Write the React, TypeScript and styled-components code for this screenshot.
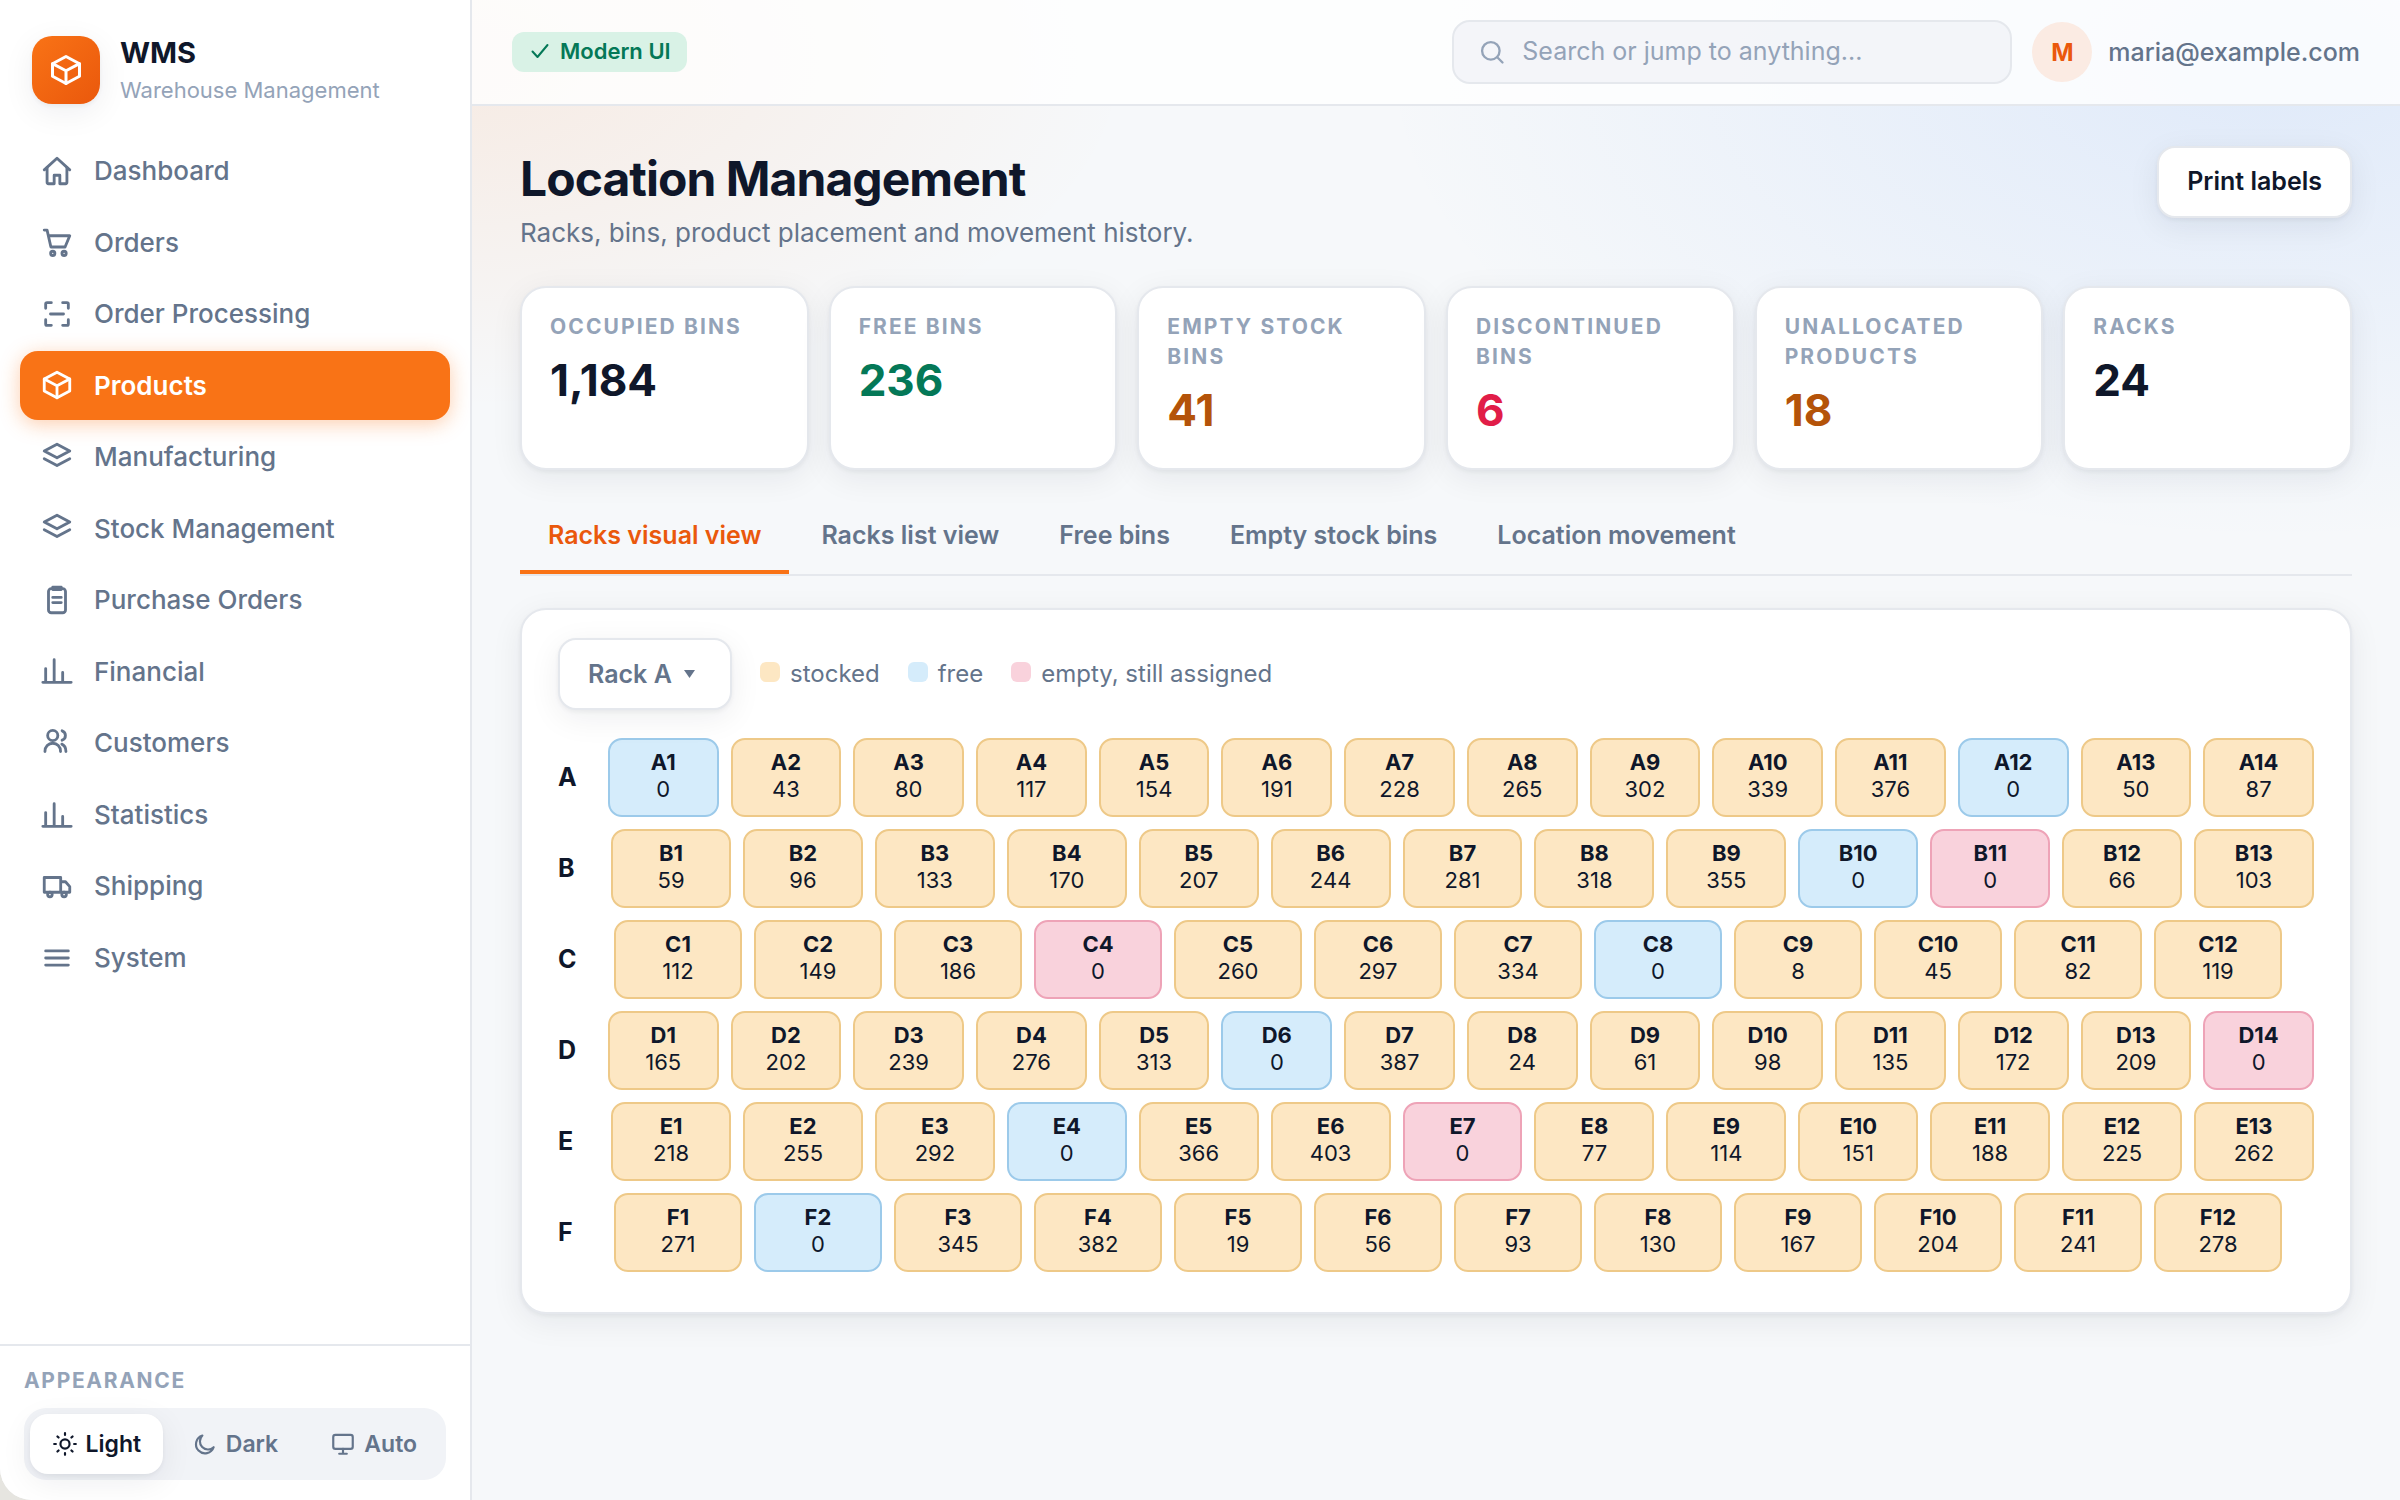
import React from "react";
import styled, { createGlobalStyle } from "styled-components";

const color = {
  ink: "#0f172a",
  muted: "#64748b",
  faint: "#94a3b8",
  line: "#e5e8ed",
  brand: "#f97316",
  brandDeep: "#ea580c",
  green: "#047857",
  amber: "#b45309",
  rose: "#e11d48",
};

const cardShadow = "0 2px 4px rgba(15, 23, 42, 0.05), 0 8px 32px rgba(15, 23, 42, 0.07)";

const GlobalStyle = createGlobalStyle`
  *, *::before, *::after { box-sizing: border-box; }
  body {
    margin: 0;
    background: #e6e5e0;
    color: ${color.ink};
    font-family: Inter, "Liberation Sans", sans-serif;
    font-size: 26px;
  }
  button, input, select { font: inherit; color: inherit; }
  h1, p, dl, dd, ul { margin: 0; padding: 0; }
`;

const Shell = styled.div`
  display: flex;
  min-height: 100vh;
  overflow: hidden;
  border-bottom-left-radius: 32px;
  background:
    radial-gradient(1000px 500px at 18% 4%, rgba(249, 115, 22, 0.1), transparent 70%),
    radial-gradient(1200px 640px at 95% 4%, rgba(59, 130, 246, 0.12), transparent 75%),
    #f6f8fa;
`;

const Sidebar = styled.aside`
  display: flex;
  flex-direction: column;
  flex: 0 0 472px;
  background: #fff;
  border-right: 2px solid ${color.line};
`;

const Brand = styled.div`
  display: flex;
  align-items: center;
  gap: 20px;
  padding: 33px 32px 29px;
`;

const BrandMark = styled.div`
  display: grid;
  place-items: center;
  width: 68px;
  height: 68px;
  border-radius: 20px;
  color: #fff;
  background: linear-gradient(135deg, ${color.brand}, ${color.brandDeep});
  box-shadow: ${cardShadow};
`;

const BrandName = styled.p`
  font-size: 29px;
  line-height: 40px;
  font-weight: 700;
`;

const BrandNote = styled.p`
  font-size: 22px;
  line-height: 34px;
  color: ${color.faint};
`;

const Nav = styled.nav`
  display: flex;
  flex-direction: column;
  gap: 2px;
  padding: 0 20px;
`;

const NavLink = styled.a<{ $active?: boolean }>`
  display: flex;
  align-items: center;
  gap: 20px;
  padding: 18px 20px;
  border-radius: 18px;
  font-size: 26px;
  line-height: 1.29;
  font-weight: ${(p) => (p.$active ? 600 : 500)};
  text-decoration: none;
  color: ${(p) => (p.$active ? "#fff" : color.muted)};
  background: ${(p) => (p.$active ? color.brand : "transparent")};
  box-shadow: ${(p) => (p.$active ? "0 4px 20px rgba(249, 115, 22, 0.35)" : "none")};
`;

const Icon = styled.svg<{ $size: number }>`
  flex: none;
  width: ${(p) => p.$size}px;
  height: ${(p) => p.$size}px;
  margin: -2px 0;
  fill: none;
  stroke: currentColor;
  stroke-width: 2;
  stroke-linecap: round;
  stroke-linejoin: round;
`;

const Appearance = styled.div`
  margin-top: auto;
  padding: 20px 24px;
  border-top: 2px solid ${color.line};
`;

const AppearanceTitle = styled.p`
  margin-bottom: 12px;
  font-size: 21px;
  line-height: 30px;
  font-weight: 700;
  letter-spacing: 0.08em;
  text-transform: uppercase;
  color: ${color.faint};
`;

const Segments = styled.div`
  display: flex;
  gap: 6px;
  padding: 6px;
  border-radius: 22px;
  background: #f1f3f7;
`;

const Segment = styled.button<{ $active?: boolean }>`
  display: flex;
  flex: 1 1 0;
  align-items: center;
  justify-content: center;
  gap: 8px;
  height: 60px;
  padding: 0;
  border: 0;
  border-radius: 18px;
  font-size: 23px;
  font-weight: 600;
  color: ${(p) => (p.$active ? color.ink : color.muted)};
  background: ${(p) => (p.$active ? "#fff" : "transparent")};
  box-shadow: ${(p) => (p.$active ? cardShadow : "none")};
`;

const Main = styled.div`
  flex: 1;
  min-width: 0;
`;

const TopBar = styled.header`
  display: flex;
  align-items: center;
  justify-content: space-between;
  height: 106px;
  padding: 0 40px;
  border-bottom: 2px solid ${color.line};
  background: rgba(255, 255, 255, 0.8);
`;

const Badge = styled.span`
  display: flex;
  align-items: center;
  gap: 8px;
  height: 40px;
  padding: 0 16px 2px;
  border-radius: 12px;
  font-size: 22px;
  font-weight: 600;
  color: ${color.green};
  background: #d9f2e6;
`;

const Account = styled.div`
  display: flex;
  align-items: center;
  gap: 20px;
`;

const SearchBox = styled.label`
  display: flex;
  align-items: center;
  gap: 16px;
  width: 560px;
  height: 64px;
  padding: 0 24px;
  border: 2px solid ${color.line};
  border-radius: 18px;
  background: rgba(241, 243, 248, 0.8);
  color: ${color.faint};
`;

const SearchInput = styled.input`
  flex: 1;
  min-width: 0;
  padding: 0 0 2px;
  border: 0;
  outline: 0;
  background: none;
  font-size: 25px;
  &::placeholder { color: ${color.faint}; opacity: 1; }
`;

const User = styled.div`
  display: flex;
  align-items: center;
  gap: 16px;
  font-size: 25px;
  font-weight: 500;
  color: ${color.muted};
`;

const Avatar = styled.span`
  display: grid;
  place-items: center;
  width: 60px;
  height: 60px;
  border-radius: 50%;
  font-size: 24px;
  font-weight: 700;
  color: ${color.brandDeep};
  background: #fbebe3;
`;

const Content = styled.main`
  padding: 40px 48px;
`;

const PageHead = styled.div`
  display: flex;
  align-items: flex-start;
  justify-content: space-between;
  margin-bottom: 32px;
`;

const Title = styled.h1`
  font-size: 48px;
  line-height: 66px;
  font-weight: 700;
  letter-spacing: -0.02em;
`;

const Subtitle = styled.p`
  font-size: 26px;
  line-height: 42px;
  color: ${color.muted};
`;

const PrintButton = styled.button`
  height: 72px;
  padding: 0 28px 2px;
  border: 2px solid ${color.line};
  border-radius: 18px;
  background: #fff;
  font-size: 25px;
  font-weight: 600;
  box-shadow: ${cardShadow};
`;

const Stats = styled.dl`
  display: grid;
  grid-template-columns: repeat(6, minmax(0, 1fr));
  gap: 20px;
`;

const StatCard = styled.div`
  padding: 24px 28px 26px;
  border: 2px solid ${color.line};
  border-radius: 26px;
  background: #fff;
  box-shadow: ${cardShadow};
`;

const StatLabel = styled.dt`
  font-size: 21px;
  line-height: 30px;
  font-weight: 700;
  letter-spacing: 0.1em;
  text-transform: uppercase;
  color: ${color.faint};
`;

const StatValue = styled.dd<{ $tone: string }>`
  padding-top: 6px !important;
  font-size: 44px;
  line-height: 64px;
  font-weight: 700;
  color: ${(p) => p.$tone};
`;

const Tabs = styled.div`
  display: flex;
  gap: 4px;
  margin: 26px 0 32px;
  border-bottom: 2px solid ${color.line};
`;

const Tab = styled.button<{ $active?: boolean }>`
  height: 78px;
  padding: 4px 28px 0;
  border: 0;
  border-bottom: 4px solid ${(p) => (p.$active ? color.brand : "transparent")};
  background: none;
  font-size: 25px;
  font-weight: 600;
  color: ${(p) => (p.$active ? color.brandDeep : color.muted)};
`;

const Panel = styled.section`
  padding: 28px 36px;
  border: 2px solid ${color.line};
  border-radius: 26px;
  background: #fff;
  box-shadow: ${cardShadow};
`;

const PanelTools = styled.div`
  display: flex;
  align-items: center;
  gap: 28px;
  margin-bottom: 28px;
`;

const SelectWrap = styled.div`
  position: relative;
  display: flex;
`;

const RackSelect = styled.select`
  appearance: none;
  height: 72px;
  padding: 0 58px 0 28px;
  border: 2px solid ${color.line};
  border-radius: 18px;
  background: #fff;
  font-size: 25px;
  font-weight: 600;
  color: ${color.muted};
  box-shadow: ${cardShadow};
`;

const Caret = styled.svg`
  position: absolute;
  top: 32px;
  right: 37px;
  width: 11px;
  height: 8px;
  fill: ${color.muted};
  pointer-events: none;
`;

const Legend = styled.ul`
  display: flex;
  gap: 28px;
  list-style: none;
  font-size: 24px;
  line-height: 36px;
  color: ${color.muted};
`;

const LegendItem = styled.li`
  display: flex;
  align-items: baseline;
  gap: 10px;
`;

type Kind = "stocked" | "free" | "empty";

const fills: Record<Kind, string> = { stocked: "#fde7c3", free: "#d5ecfb", empty: "#f9d2dc" };
const edges: Record<Kind, string> = { stocked: "#eec988", free: "#9ccaea", empty: "#eea3b7" };

const Swatch = styled.span<{ $kind: Kind }>`
  width: 20px;
  height: 20px;
  border-radius: 6px;
  background: ${(p) => fills[p.$kind]};
`;

const RackRow = styled.div`
  display: flex;
  align-items: center;
  gap: 12px;
  margin-bottom: 12px;
`;

const RowName = styled.span`
  flex: 0 1 44px;
  min-width: 0;
  padding-bottom: 2px;
  font-size: 25px;
  font-weight: 700;
`;

const Bin = styled.button<{ $kind: Kind }>`
  flex: 0 1 128px;
  min-width: 0;
  padding: 9px 0 12px;
  border: 2px solid ${(p) => edges[p.$kind]};
  border-radius: 14px;
  background: ${(p) => fills[p.$kind]};
  font-size: 22px;
  line-height: 27px;
`;

const BinName = styled.strong`
  display: block;
  font-weight: 700;
`;

const icons: Record<string, React.ReactNode> = {
  home: (
    <>
      <path d="M3 11.2 12 3l9 8.2" />
      <path d="M5 9.6V20a1 1 0 0 0 1 1h4v-6h4v6h4a1 1 0 0 0 1-1V9.6" />
    </>
  ),
  cart: (
    <>
      <path d="M3 3.6h2l2.7 11.9h10L21 7.6H6" />
      <circle cx="9" cy="20" r="1.5" />
      <circle cx="17" cy="20" r="1.5" />
    </>
  ),
  scan: <path d="M4 8V5a1 1 0 0 1 1-1h3M16 4h3a1 1 0 0 1 1 1v3M20 16v3a1 1 0 0 1-1 1h-3M8 20H5a1 1 0 0 1-1-1v-3M7.4 12h9.2" />,
  box: (
    <>
      <path d="M12 3l9 4.8v8.4L12 21l-9-4.8V7.8z" />
      <path d="M3 7.8l9 4.7 9-4.7M12 12.5V21" />
    </>
  ),
  layers: (
    <>
      <path d="M12 3l9 4.8-9 4.8-9-4.8z" />
      <path d="M3 13.2 12 18l9-4.8" />
    </>
  ),
  clipboard: (
    <>
      <rect x="6" y="4" width="12" height="17" rx="2" />
      <path d="M9 3h6v1.6H9zM9 10.2h6M9 13.8h6" />
    </>
  ),
  bars: <path d="M2 20h20M4 20v-9.7M10 20V4M16 20v-7" />,
  users: (
    <>
      <circle cx="9" cy="6.7" r="3.6" />
      <path d="M3.5 18c0-3.5 2.4-5.8 5.5-5.8s5.5 2.3 5.5 5.8M15.6 3.4a3.5 3.5 0 0 1 0 6.6M15.4 12.8c1.9.9 2.9 2.7 2.9 5.2" />
    </>
  ),
  truck: (
    <>
      <path d="M3 6h11.6v10.4H3zM14.6 9H18l3 3.4v4h-6.4" />
      <circle cx="7" cy="18" r="1.6" />
      <circle cx="17" cy="18" r="1.6" />
    </>
  ),
  menu: <path d="M4 7h16M4 12h16M4 17h16" />,
  sun: (
    <>
      <circle cx="12" cy="12" r="4.2" />
      <path d="M12 2v1.6M12 20.4V22M2 12h1.6M20.4 12H22M5 5l1.1 1.1M17.9 17.9 19 19M5 19l1.1-1.1M17.9 6.1 19 5" />
    </>
  ),
  moon: <path d="M20 15A8.4 8.4 0 1 1 9.6 4.2 7.4 7.4 0 0 0 20 15z" />,
  monitor: (
    <>
      <rect x="3" y="3.5" width="18" height="13" rx="2" />
      <path d="M12 16.5V21M8.5 21h7" />
    </>
  ),
  search: (
    <>
      <circle cx="11" cy="11" r="7.5" />
      <path d="M16.5 16.5 21 21" />
    </>
  ),
  check: <path d="M4.5 12.5l5 5.5L19.5 6" />,
};

function Glyph({ name, size }: { name: string; size: number }) {
  return (
    <Icon $size={size} viewBox="0 0 24 24" aria-hidden="true">
      {icons[name]}
    </Icon>
  );
}

const navItems: [string, string][] = [
  ["home", "Dashboard"],
  ["cart", "Orders"],
  ["scan", "Order Processing"],
  ["box", "Products"],
  ["layers", "Manufacturing"],
  ["layers", "Stock Management"],
  ["clipboard", "Purchase Orders"],
  ["bars", "Financial"],
  ["users", "Customers"],
  ["bars", "Statistics"],
  ["truck", "Shipping"],
  ["menu", "System"],
];

const themes: [string, string][] = [
  ["sun", "Light"],
  ["moon", "Dark"],
  ["monitor", "Auto"],
];

const stats: [string, string, string][] = [
  ["Occupied bins", "1,184", color.ink],
  ["Free bins", "236", color.green],
  ["Empty stock bins", "41", color.amber],
  ["Discontinued bins", "6", color.rose],
  ["Unallocated products", "18", color.amber],
  ["Racks", "24", color.ink],
];

const tabs = ["Racks visual view", "Racks list view", "Free bins", "Empty stock bins", "Location movement"];

const legend: [Kind, string][] = [
  ["stocked", "stocked"],
  ["free", "free"],
  ["empty", "empty, still assigned"],
];

const rows: [string, number[]][] = [
  ["A", [0, 43, 80, 117, 154, 191, 228, 265, 302, 339, 376, 0, 50, 87]],
  ["B", [59, 96, 133, 170, 207, 244, 281, 318, 355, 0, 0, 66, 103]],
  ["C", [112, 149, 186, 0, 260, 297, 334, 0, 8, 45, 82, 119]],
  ["D", [165, 202, 239, 276, 313, 0, 387, 24, 61, 98, 135, 172, 209, 0]],
  ["E", [218, 255, 292, 0, 366, 403, 0, 77, 114, 151, 188, 225, 262]],
  ["F", [271, 0, 345, 382, 19, 56, 93, 130, 167, 204, 241, 278]],
];

const stillAssigned = new Set(["B11", "C4", "D14", "E7"]);

function kindOf(id: string, count: number): Kind {
  if (count > 0) return "stocked";
  return stillAssigned.has(id) ? "empty" : "free";
}

export default function App() {
  return (
    <>
      <GlobalStyle />
      <Shell>
        <Sidebar>
          <Brand>
            <BrandMark>
              <Glyph name="box" size={36} />
            </BrandMark>
            <div>
              <BrandName>WMS</BrandName>
              <BrandNote>Warehouse Management</BrandNote>
            </div>
          </Brand>
          <Nav>
            {navItems.map(([icon, label]) => (
              <NavLink key={label} href="#" $active={label === "Products"}>
                <Glyph name={icon} size={34} />
                {label}
              </NavLink>
            ))}
          </Nav>
          <Appearance>
            <AppearanceTitle>Appearance</AppearanceTitle>
            <Segments>
              {themes.map(([icon, label]) => (
                <Segment key={label} type="button" $active={label === "Light"}>
                  <Glyph name={icon} size={26} />
                  {label}
                </Segment>
              ))}
            </Segments>
          </Appearance>
        </Sidebar>
        <Main>
          <TopBar>
            <Badge>
              <Glyph name="check" size={24} />
              Modern UI
            </Badge>
            <Account>
              <SearchBox>
                <Glyph name="search" size={28} />
                <SearchInput type="search" aria-label="Search" placeholder="Search or jump to anything..." />
              </SearchBox>
              <User>
                <Avatar>M</Avatar>
                maria@example.com
              </User>
            </Account>
          </TopBar>
          <Content>
            <PageHead>
              <div>
                <Title>Location Management</Title>
                <Subtitle>Racks, bins, product placement and movement history.</Subtitle>
              </div>
              <PrintButton type="button">Print labels</PrintButton>
            </PageHead>
            <Stats>
              {stats.map(([label, value, tone]) => (
                <StatCard key={label}>
                  <StatLabel>{label}</StatLabel>
                  <StatValue $tone={tone}>{value}</StatValue>
                </StatCard>
              ))}
            </Stats>
            <Tabs role="tablist">
              {tabs.map((label, i) => (
                <Tab key={label} type="button" role="tab" aria-selected={i === 0} $active={i === 0}>
                  {label}
                </Tab>
              ))}
            </Tabs>
            <Panel>
              <PanelTools>
                <SelectWrap>
                  <RackSelect aria-label="Rack">
                    <option>Rack A</option>
                  </RackSelect>
                  <Caret viewBox="0 0 11 8" aria-hidden="true">
                    <path d="M0 0h11L5.5 8z" />
                  </Caret>
                </SelectWrap>
                <Legend>
                  {legend.map(([kind, label]) => (
                    <LegendItem key={kind}>
                      <Swatch $kind={kind} />
                      {label}
                    </LegendItem>
                  ))}
                </Legend>
              </PanelTools>
              {rows.map(([row, counts]) => (
                <RackRow key={row}>
                  <RowName>{row}</RowName>
                  {counts.map((count, i) => {
                    const id = `${row}${i + 1}`;
                    return (
                      <Bin key={id} type="button" $kind={kindOf(id, count)}>
                        <BinName>{id}</BinName>
                        {count}
                      </Bin>
                    );
                  })}
                </RackRow>
              ))}
            </Panel>
          </Content>
        </Main>
      </Shell>
    </>
  );
}
